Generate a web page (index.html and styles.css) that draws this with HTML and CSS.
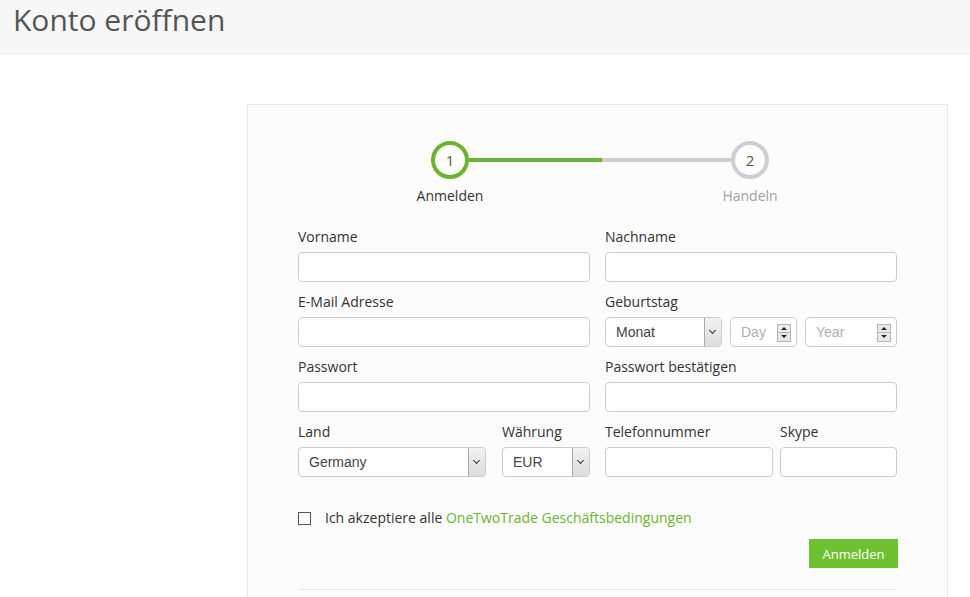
FILE: index.html
```html
<!DOCTYPE html>
<html>
<head lang="de">
    <meta charset="UTF-8">
    <title>Konto eröffnen</title>
    <link rel="stylesheet" href="styles.css">
</head>
<body>
    <div class="top">
        <h1>Konto eröffnen</h1>
    </div>

    <div class="card">
        <div class="steps">
            <span class="circle on">1</span>
            <span class="bar"><span class="done"></span></span>
            <span class="circle">2</span>
        </div>
        <div class="step_names">
            <span class="on">Anmelden</span>
            <span>Handeln</span>
        </div>

        <form class="form">
            <div class="row">
                <div class="field">
                    <label>Vorname</label>
                    <input class="txt" type="text">
                </div>
                <div class="field">
                    <label>Nachname</label>
                    <input class="txt" type="text">
                </div>
            </div>
            <div class="row">
                <div class="field">
                    <label>E-Mail Adresse</label>
                    <input class="txt" type="text">
                </div>
                <div class="field">
                    <label>Geburtstag</label>
                    <div class="birth">
                        <div class="sel w_month">
                            <select><option>Monat</option></select>
                            <span class="arrow"></span>
                        </div>
                        <div class="num w_day">
                            <input type="text" placeholder="Day">
                            <span class="spin"><i class="up"></i><i class="down"></i></span>
                        </div>
                        <div class="num w_year">
                            <input type="text" placeholder="Year">
                            <span class="spin"><i class="up"></i><i class="down"></i></span>
                        </div>
                    </div>
                </div>
            </div>
            <div class="row">
                <div class="field">
                    <label>Passwort</label>
                    <input class="txt" type="password">
                </div>
                <div class="field">
                    <label>Passwort bestätigen</label>
                    <input class="txt" type="password">
                </div>
            </div>
            <div class="row">
                <div class="pair left">
                    <div class="field">
                        <label>Land</label>
                        <div class="sel">
                            <select><option>Germany</option></select>
                            <span class="arrow"></span>
                        </div>
                    </div>
                    <div class="field">
                        <label>Währung</label>
                        <div class="sel">
                            <select><option>EUR</option></select>
                            <span class="arrow"></span>
                        </div>
                    </div>
                </div>
                <div class="pair right">
                    <div class="field">
                        <label>Telefonnummer</label>
                        <input class="txt" type="text">
                    </div>
                    <div class="field">
                        <label>Skype</label>
                        <input class="txt" type="text">
                    </div>
                </div>
            </div>

            <div class="terms">
                <span class="box"></span>
                <span>Ich akzeptiere alle <a href="#">OneTwoTrade Geschäftsbedingungen</a></span>
            </div>
            <div class="actions">
                <button type="button" class="btn">Anmelden</button>
            </div>
            <div class="rule"></div>
        </form>
    </div>
</body>
</html>
```

FILE: styles.css
```css
body {
    margin: 0;
    background: #fff;
    font-family: "Open Sans", sans-serif;
    color: #333;
    overflow: hidden;
}

.top {
    height: 53px;
    background: #f7f7f7;
    border-bottom: 1px solid #ededed;
}

.top h1 {
    margin: 0;
    padding: 0 0 0 13px;
    font-size: 30px;
    font-weight: 400;
    line-height: 40px;
    color: #555;
}

.card {
    margin: 50px 0 0 247px;
    width: 599px;
    height: 600px;
    padding: 36px 50px 0 50px;
    background: #fcfcfc;
    border: 1px solid #e6e6e6;
}

/* steps */
.steps {
    display: flex;
    align-items: center;
    margin-left: 133px;
}

.circle {
    width: 30px;
    height: 30px;
    border: 4px solid #ccced2;
    border-radius: 50%;
    background: #fff;
    text-align: center;
    line-height: 30px;
    font-size: 15px;
    color: #555;
}

.circle.on {
    border-color: #6ab42f;
}

.bar {
    width: 262px;
    height: 4px;
    background: #ccced2;
}

.bar .done {
    display: block;
    width: 133px;
    height: 4px;
    background: #6ab42f;
}

.step_names {
    display: flex;
    margin: 7px 0 0 102px;
    gap: 200px;
}

.step_names span {
    width: 100px;
    text-align: center;
    font-size: 14px;
    line-height: 20px;
    color: #a0a3a8;
}

.step_names span.on {
    color: #333;
}

/* form */
.form {
    margin-top: 21px;
}

.row {
    display: grid;
    grid-template-columns: 292px 292px;
    column-gap: 15px;
    margin-bottom: 10px;
}

.field label {
    display: block;
    font-size: 14px;
    line-height: 20px;
    margin-bottom: 5px;
}

.txt {
    display: block;
    box-sizing: border-box;
    width: 100%;
    height: 30px;
    border: 1px solid #ccc;
    border-radius: 4px;
    background: #fff;
    outline: none;
}

.pair {
    display: grid;
}

.pair.left {
    grid-template-columns: 188px 88px;
    column-gap: 16px;
}

.pair.right {
    grid-template-columns: 168px 117px;
    column-gap: 7px;
}

.birth {
    display: flex;
    gap: 8px;
}

.w_month {
    width: 117px;
}

.w_day {
    width: 67px;
}

.w_year {
    width: 92px;
}

.sel, .num {
    position: relative;
    box-sizing: border-box;
    height: 30px;
    border: 1px solid #ccc;
    border-radius: 4px;
    background: #fff;
}

.sel select, .num input {
    box-sizing: border-box;
    width: 100%;
    height: 28px;
    border: none;
    outline: none;
    background: none;
    -webkit-appearance: none;
    appearance: none;
    padding: 0 0 0 10px;
    font-family: "Liberation Sans", Arial, sans-serif;
    font-size: 14px;
    color: #444;
}

.num input::placeholder {
    color: #b0b0b0;
}

.arrow {
    position: absolute;
    top: 0;
    right: 0;
    width: 16px;
    height: 28px;
    background: linear-gradient(#f2f2f2, #dcdcdc);
    border-left: 1px solid #aaa;
    border-radius: 0 3px 3px 0;
}

.arrow:after {
    content: "";
    position: absolute;
    left: 5px;
    top: 10px;
    width: 4px;
    height: 4px;
    border-right: 1.5px solid #333;
    border-bottom: 1.5px solid #333;
    transform: rotate(45deg);
}

.spin {
    position: absolute;
    right: 5px;
    top: 6px;
    width: 12px;
    height: 16px;
    border: 1px solid #b5b5b5;
    background: #e9e9e9;
}

.spin i {
    display: block;
    height: 8px;
    position: relative;
}

.spin .up {
    border-bottom: 1px solid #b5b5b5;
    height: 7px;
}

.spin i:after {
    content: "";
    position: absolute;
    left: 3px;
    border-left: 3px solid transparent;
    border-right: 3px solid transparent;
}

.spin .up:after {
    top: 2px;
    border-bottom: 3px solid #222;
}

.spin .down:after {
    top: 2px;
    border-top: 3px solid #222;
}

/* terms */
.terms {
    display: flex;
    align-items: center;
    margin-top: 31px;
    font-size: 14px;
    line-height: 20px;
}

.terms .box {
    width: 11px;
    height: 11px;
    border: 1px solid #555;
    background: #fff;
    margin-right: 14px;
}

.terms a {
    color: #6ab42f;
    text-decoration: none;
}

.actions {
    display: flex;
    justify-content: flex-end;
    margin: 11px -1px 0 0;
}

.btn {
    width: 89px;
    height: 29px;
    border: none;
    background: #6ec130;
    color: #fff;
    font-family: "Open Sans", sans-serif;
    font-size: 13px;
    padding: 0;
}

.rule {
    margin-top: 21px;
    border-top: 1px solid #e5e5e5;
}
```
